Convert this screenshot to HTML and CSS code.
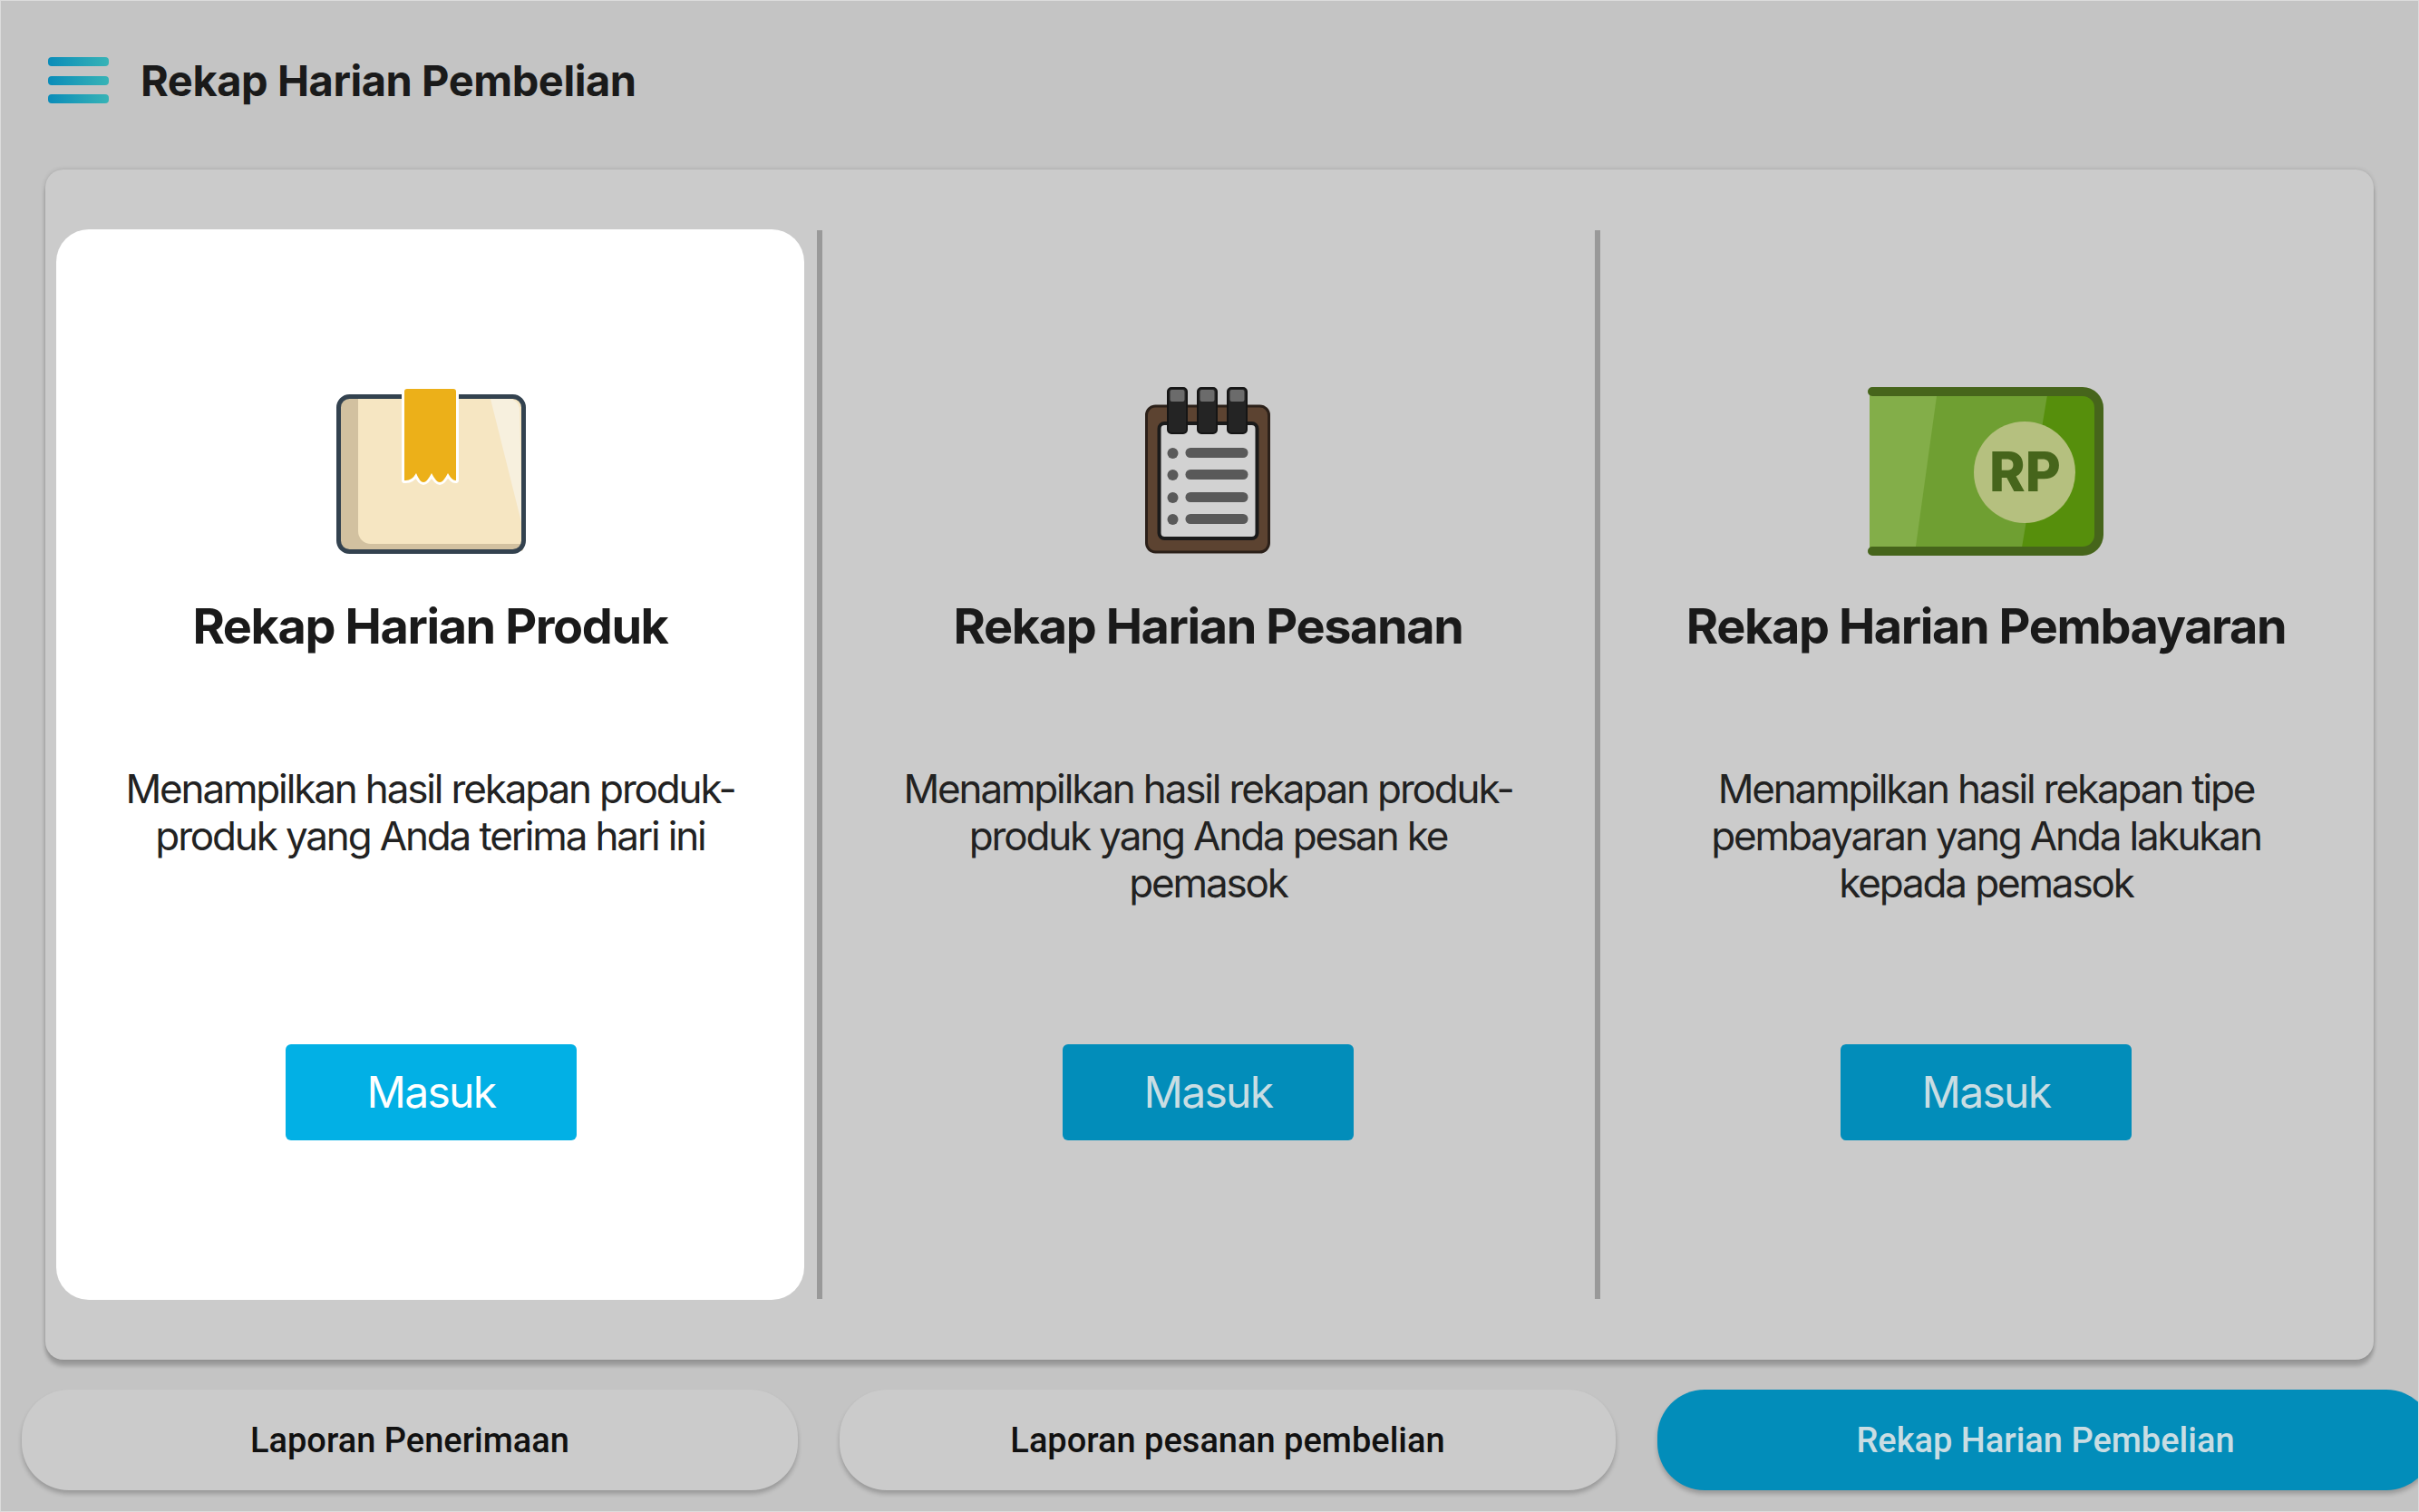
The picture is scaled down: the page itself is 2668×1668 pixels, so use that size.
FILE: index.html
```html
<!DOCTYPE html>
<html lang="id">
<head>
<meta charset="utf-8">
<title>Rekap Harian Pembelian</title>
<link rel="stylesheet" href="styles.css">
</head>
<body>
<div class="page">
  <header class="topbar">
    <svg class="menu-icon" width="68" height="52" viewBox="0 0 68 52">
      <defs>
        <linearGradient id="barGrad" x1="0" x2="1" y1="0" y2="0">
          <stop offset="0" stop-color="#0a8cb9"/>
          <stop offset="1" stop-color="#37b3b6"/>
        </linearGradient>
      </defs>
      <rect x="0" y="0" width="67" height="10" rx="4" fill="url(#barGrad)"/>
      <rect x="0" y="21" width="67" height="10" rx="4" fill="url(#barGrad)"/>
      <rect x="0" y="41" width="67" height="10" rx="4" fill="url(#barGrad)"/>
    </svg>
    <h1 class="page-title">Rekap Harian Pembelian</h1>
  </header>

  <main class="panel">
    <section class="col col-active">
      <div class="icon-slot">
        <svg width="212" height="190" viewBox="0 0 212 190">
          <rect x="4.500" y="12.500" width="204" height="171" rx="12" fill="#f6e6c2"/>
          <path d="M6 26a11 11 0 0 1 11-11h9v146a14 14 0 0 0 14 14h168v5a3 3 0 0 1-3 3H17a11 11 0 0 1-11-11z" fill="#d2c1a0"/>
          <path d="M172 15h20a12 12 0 0 1 12 12l3 128z" fill="#f7f0de"/>
          <rect x="4.500" y="12.500" width="204" height="171" rx="12" fill="none" stroke="#33424f" stroke-width="5"/>
          <path class="ribbon" d="M77 7a3 3 0 0 1 3-3h51a3 3 0 0 1 3 3V105Q130 106 125 97Q120 107 116 107Q112 107 107 97Q102 107 98 107Q94 107 90 97Q85 106 77 105Z"/>
        </svg>
      </div>
      <h2 class="col-title">Rekap Harian Produk</h2>
      <p class="col-text">Menampilkan hasil rekapan produk-<br>produk yang Anda terima hari ini</p>
      <button class="enter-btn enter-btn-bright">Masuk</button>
    </section>

    <div class="divider"></div>

    <section class="col">
      <div class="icon-slot">
        <svg width="140" height="190" viewBox="0 0 140 190">
          <rect x="1.500" y="23" width="135" height="161" rx="10" fill="#5c4331" stroke="#2b2019" stroke-width="3"/>
          <rect x="15.500" y="42" width="108" height="127" rx="6" fill="#d2d2d2" stroke="#1a1a1a" stroke-width="4"/>
          <g fill="#242424" stroke="#151515" stroke-width="2">
            <rect x="25" y="3" width="21" height="50" rx="4"/>
            <rect x="58" y="3" width="21" height="50" rx="4"/>
            <rect x="91" y="3" width="21" height="50" rx="4"/>
          </g>
          <g fill="#6b6b6b">
            <rect x="27.500" y="5" width="16" height="13" rx="2"/>
            <rect x="60.500" y="5" width="16" height="13" rx="2"/>
            <rect x="93.500" y="5" width="16" height="13" rx="2"/>
          </g>
          <g fill="#595959">
            <circle cx="30.500" cy="75" r="6"/>
            <circle cx="30.500" cy="99" r="6"/>
            <circle cx="30.500" cy="124" r="6"/>
            <circle cx="30.500" cy="148" r="6"/>
            <rect x="44.500" y="69" width="69" height="11" rx="5.500"/>
            <rect x="44.500" y="93" width="69" height="11" rx="5.500"/>
            <rect x="44.500" y="118" width="69" height="11" rx="5.500"/>
            <rect x="44.500" y="142" width="69" height="11" rx="5.500"/>
          </g>
        </svg>
      </div>
      <h2 class="col-title">Rekap Harian Pesanan</h2>
      <p class="col-text">Menampilkan hasil rekapan produk-<br>produk yang Anda pesan ke<br>pemasok</p>
      <button class="enter-btn">Masuk</button>
    </section>

    <div class="divider"></div>

    <section class="col">
      <div class="icon-slot">
        <svg width="262" height="190" viewBox="0 0 262 190">
          <path d="M2 5h235a20 20 0 0 1 20 20v140a20 20 0 0 1-20 20H2z" fill="#568f0c"/>
          <path d="M2 5h197l-30 180H2z" fill="#6f9f32"/>
          <path d="M2 5h75L52 185H2z" fill="#83ae49"/>
          <path d="M5 2h232a23 23 0 0 1 23 23v140a23 23 0 0 1-23 23H5a5 5 0 0 1 0-10h232a13 13 0 0 0 13-13V25a13 13 0 0 0-13-13H5a5 5 0 0 1 0-10z" fill="#46651b"/>
          <circle cx="173" cy="96" r="56" fill="#b5c07f"/>
          <text class="rp-text" x="173.500" y="117" text-anchor="middle">RP</text>
        </svg>
      </div>
      <h2 class="col-title">Rekap Harian Pembayaran</h2>
      <p class="col-text">Menampilkan hasil rekapan tipe<br>pembayaran yang Anda lakukan<br>kepada pemasok</p>
      <button class="enter-btn">Masuk</button>
    </section>
  </main>

  <nav class="tabs">
    <a class="tab">Laporan Penerimaan</a>
    <a class="tab">Laporan pesanan pembelian</a>
    <a class="tab tab-active">Rekap Harian Pembelian</a>
  </nav>
</div>
</body>
</html>
```
FILE: styles.css
```css
* { box-sizing: border-box; }
html, body { margin: 0; padding: 0; }
body { width: 2668px; height: 1668px; overflow: hidden; background: #c4c4c4; }

.page {
  width: 2668px;
  height: 1668px;
  overflow: hidden;
  background: #c4c4c4;
  border: 1px solid #dcdcdc;
  font-family: "Inter", "Liberation Sans", sans-serif;
  color: #1a1a1a;
}

.topbar {
  height: 175px;
  display: flex;
  align-items: center;
  padding-left: 52px;
  gap: 34px;
}
.menu-icon { display: block; flex: none; margin-top: 1px; }
.page-title {
  margin: 0;
  font-size: 47px;
  font-weight: 700;
  letter-spacing: -0.45px;
  line-height: 60px;
}

.panel {
  margin: 11px 0 0 49px;
  width: 2568px;
  height: 1313px;
  padding: 66px 15px 66px 12px;
  display: flex;
  background: #cbcbcb;
  border-radius: 20px;
  box-shadow: 0 7px 4px rgba(0, 0, 0, .2), 0 0 5px rgba(0, 0, 0, .16);
}

.col {
  flex: none;
  width: 825px;
  height: 1181px;
  padding-top: 172px;
  display: flex;
  flex-direction: column;
  align-items: center;
  border-radius: 36px;
}
.col-active { background: #fff; }

.divider {
  flex: none;
  width: 6px;
  height: 1179px;
  margin: 1px 13px 0 14px;
  background: #999;
}

.icon-slot { height: 190px; display: flex; justify-content: center; }
.icon-slot svg { display: block; }

.col-title {
  margin: 41px 0 0;
  font-size: 54px;
  font-weight: 700;
  line-height: 70px;
  letter-spacing: -1.4px;
  text-align: center;
}
.col-text {
  margin: 118px 0 0;
  height: 308px;
  font-size: 44px;
  line-height: 52px;
  letter-spacing: -2.15px;
  text-align: center;
  color: #222;
}

.enter-btn {
  width: 321px;
  height: 106px;
  border: 0;
  border-radius: 6px;
  background: #028dba;
  color: #c9dde3;
  font-family: "Inter", "Liberation Sans", sans-serif;
  font-size: 48px;
  letter-spacing: -1.7px;
  padding-bottom: 3px;
}
.enter-btn-bright { background: #02b0e5; color: #fff; margin-left: 2px; }

.ribbon { fill: #ecb019; stroke: #fff; stroke-width: 6; stroke-linejoin: round; paint-order: stroke; }

.tabs {
  margin-top: 33px;
  padding-left: 23px;
  display: flex;
  gap: 46px;
}
.tab {
  flex: none;
  width: 856px;
  height: 111px;
  display: flex;
  align-items: center;
  justify-content: center;
  border-radius: 52px;
  background: #cbcbcb;
  box-shadow: 0 4px 5px rgba(0, 0, 0, .22);
  font-family: "Roboto", "Liberation Sans", sans-serif;
  font-size: 38px;
  font-weight: 500;
  color: #111;
}
.tab-active { background: #028dba; color: #c9dde3; }

.rp-text {
  font-family: "Inter", "Liberation Sans", sans-serif;
  font-size: 60px;
  font-weight: 800;
  fill: #46651b;
}
```
